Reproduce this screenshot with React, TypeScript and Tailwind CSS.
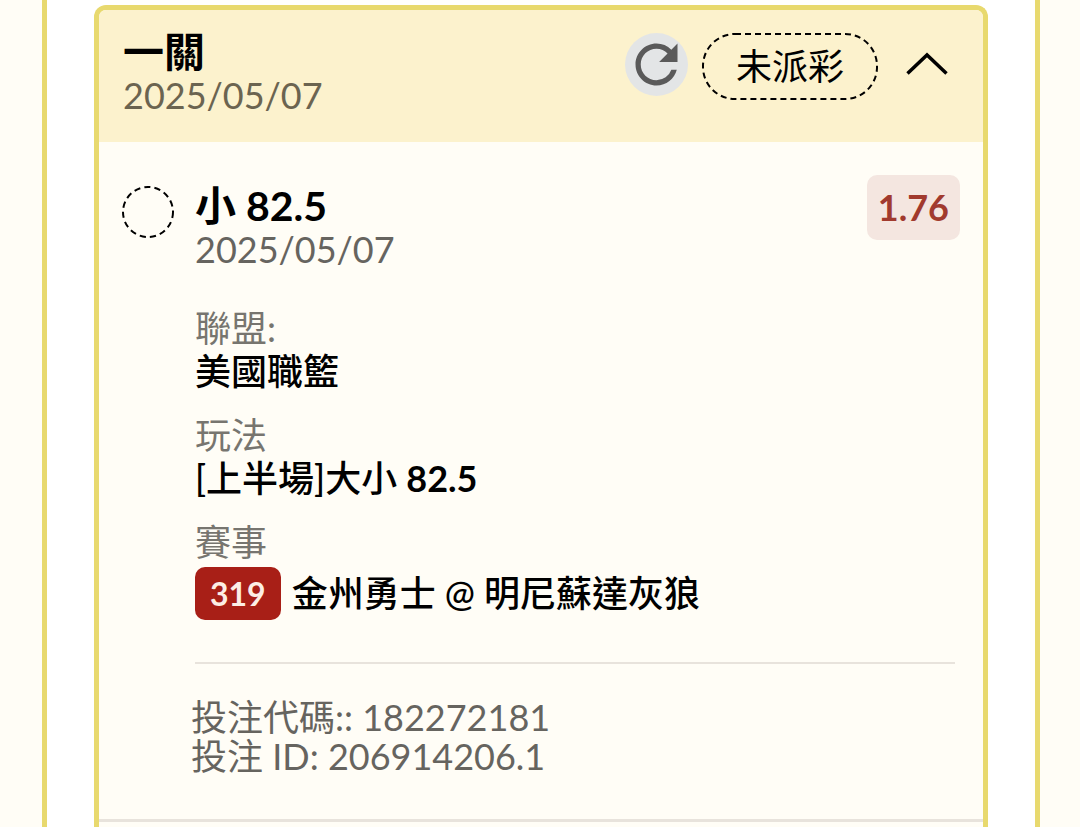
import { useState } from "react";

type Bet = {
  pick: string;
  date: string;
  odds: string;
  league: string;
  play: string;
  line: string;
  gameNo: string;
  match: string;
  code: string;
  id: string;
};

const bet: Bet = {
  pick: "小 82.5",
  date: "2025/05/07",
  odds: "1.76",
  league: "美國職籃",
  play: "[上半場]大小",
  line: "82.5",
  gameNo: "319",
  match: "金州勇士 @ 明尼蘇達灰狼",
  code: "182272181",
  id: "206914206.1",
};

function RefreshIcon() {
  return (
    <svg viewBox="0 0 24 24" className="size-full" fill="#5a5a5a" aria-hidden="true">
      <path d="M17.65 6.35A7.96 7.96 0 0 0 12 4c-4.42 0-7.99 3.58-7.99 8s3.57 8 7.99 8c3.73 0 6.84-2.55 7.73-6h-2.08A5.99 5.99 0 0 1 12 18c-3.31 0-6-2.69-6-6s2.69-6 6-6c1.66 0 3.14.69 4.22 1.78L13 11h7V4l-2.35 2.35z" />
    </svg>
  );
}

function ChevronIcon({ open }: { open: boolean }) {
  return (
    <svg
      viewBox="0 0 42 24"
      className={open ? "h-6 w-[42px]" : "h-6 w-[42px] rotate-180"}
      aria-hidden="true"
    >
      <path d="M1.5 21.5L21 3l19.5 18.5" fill="none" stroke="#000" strokeWidth="3.5" />
    </svg>
  );
}

function BetDetail({ bet }: { bet: Bet }) {
  return (
    <div className="flex border-b-3 border-[#e8e3dc] px-[23px] pt-[42px] pb-[43px]">
      <svg viewBox="0 0 52 52" className="mt-0.5 mr-[21px] size-[52px] shrink-0" aria-hidden="true">
        <circle
          cx="26"
          cy="26"
          r="25"
          fill="none"
          stroke="#000"
          strokeWidth="2"
          strokeDasharray="6.2 4.1"
        />
      </svg>
      <div className="min-w-0 flex-1">
        <div className="flex items-start justify-between">
          <div>
            <h3 className="text-[41px] leading-[44px] font-bold">{bet.pick}</h3>
            <time className="block text-[36px] leading-[42px] text-[#66645f]">{bet.date}</time>
          </div>
          <span className="-mt-[9px] rounded-[10px] bg-[#f4e6e0] px-[11px] text-[36px] leading-[65px] font-bold text-[#a13a2e]">
            {bet.odds}
          </span>
        </div>
        <dl className="mt-[37px] flex flex-col gap-[21px] text-[36px] leading-[43px]">
          <div>
            <dt className="text-[#77756f]">聯盟:</dt>
            <dd className="font-medium">{bet.league}</dd>
          </div>
          <div>
            <dt className="text-[#77756f]">玩法</dt>
            <dd className="font-medium">
              {bet.play} <span className="font-bold">{bet.line}</span>
            </dd>
          </div>
          <div>
            <dt className="text-[#77756f]">賽事</dt>
            <dd className="mt-[3px] flex items-center gap-[11px] font-medium">
              <span className="rounded-[10px] bg-[#a81f17] px-[15px] text-[32px] leading-[53px] font-bold text-[#fdeee6]">
                {bet.gameNo}
              </span>
              {bet.match}
            </dd>
          </div>
        </dl>
        <hr className="mt-[42px] mr-[5px] border-t-2 border-[#e8e3dc]" />
        <div className="-ml-1 pt-[34px] text-[36px] leading-[39px] text-[#66645f]">
          <p>投注代碼:: {bet.code}</p>
          <p>投注 ID: {bet.id}</p>
        </div>
      </div>
    </div>
  );
}

export default function App() {
  const [open, setOpen] = useState(true);

  return (
    <div className="flex min-h-screen bg-[#fffdf6] pr-10 pl-[42px] font-[Lato,'Noto_Sans_CJK_TC',sans-serif] text-black">
      <main className="flex flex-1 border-x-5 border-[#e8d96e] bg-white px-[47px] pt-[5px]">
        <section className="flex-1 overflow-hidden rounded-t-[12px] border-5 border-b-0 border-[#e8d96e] bg-[#fffdf6]">
          <header className="flex items-start justify-between bg-[#fcf2cd] pt-5 pr-[35px] pb-[26px] pl-6">
            <div>
              <h2 className="text-[41px] leading-[44px] font-bold">一關</h2>
              <time className="block text-[36px] leading-[42px] text-[#6b6450]">2025/05/07</time>
            </div>
            <div className="mt-[3px] flex items-start">
              <button
                type="button"
                aria-label="重新整理"
                className="size-[63px] rounded-full bg-[#e3e5e6]"
              >
                <RefreshIcon />
              </button>
              <span className="relative ml-[14px] px-[34px] text-[36px] leading-[67px]">
                <svg className="absolute inset-0 size-full overflow-visible" aria-hidden="true">
                  <rect
                    x="1"
                    y="1"
                    rx="32"
                    className="h-[65px] w-[calc(100%-2px)]"
                    fill="none"
                    stroke="#000"
                    strokeWidth="2"
                    strokeDasharray="6 4"
                  />
                </svg>
                未派彩
              </span>
              <button
                type="button"
                aria-label="收合"
                aria-expanded={open}
                className="ml-7 flex h-[62px] items-center"
                onClick={() => setOpen(!open)}
              >
                <ChevronIcon open={open} />
              </button>
            </div>
          </header>
          {open && <BetDetail bet={bet} />}
        </section>
      </main>
    </div>
  );
}
